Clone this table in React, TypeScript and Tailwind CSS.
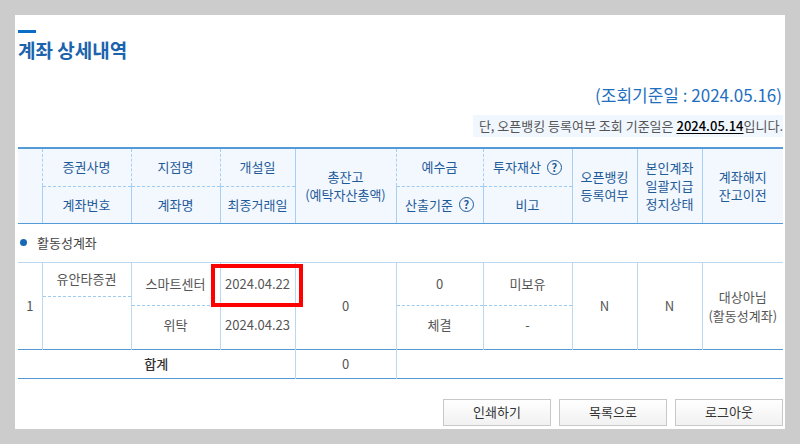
import React from 'react'

const th =
  'border-l border-[#a8d0f4] bg-[#f2f8fe] p-0 font-normal text-[#1f5a99] leading-[18px]'
const td = 'border-l border-[#bcd8f1] p-0 font-normal text-[#555] text-center'

const QIcon = () => (
  <span className="ml-[6px] inline-flex h-[15px] w-[15px] items-center justify-center rounded-full border-[1.5px] border-[#1f5a99] text-[11px] leading-none font-bold text-[#1f5a99]">
    ?
  </span>
)

const Split = ({
  top,
  bottom,
  topH,
  botH,
}: {
  top: React.ReactNode
  bottom?: React.ReactNode
  topH: string
  botH: string
}) => (
  <div className="flex flex-col">
    <div className={`${topH} flex items-center justify-center`}>{top}</div>
    <div
      className={`${botH} flex items-center justify-center border-t border-dashed border-[#9fcbf0] pb-1`}
    >
      {bottom}
    </div>
  </div>
)

const App = () => {
  return (
    <div className="min-h-[444px] bg-[#cccccc] p-[15px] font-['Noto_Sans_CJK_KR','Liberation_Sans',sans-serif]">
      <div className="h-[414px] w-[770px] bg-white pt-[15px] pr-[2px] pl-[3px]">
        <div className="h-[3px] w-[18px] bg-[#0a6ec8]" />
        <h1 className="mt-[4px] text-[19px] leading-[26px] font-bold text-[#1b64ad]">
          계좌 상세내역
        </h1>

        <div className="mt-[19px] flex flex-col items-end">
          <p className="pr-[1px] text-[17px] leading-[26px] text-[#1f6fbf]">
            (조회기준일 : 2024.05.16)
          </p>
          <p className="mt-[7px] h-[22px] bg-[#f1f7fe] pl-[6px] text-[13px] leading-[22px] text-[#555]">
            단, 오픈뱅킹 등록여부 조회 기준일은{' '}
            <span className="font-medium text-black underline underline-offset-2">
              2024.05.14
            </span>
            입니다.
          </p>
        </div>

        <table className="mt-[10px] w-full table-fixed border-collapse border-t-2 border-[#549ad6] text-[13px]">
          <colgroup>
            <col className="w-[24px]" />
            <col className="w-[89px]" />
            <col className="w-[89px]" />
            <col className="w-[75px]" />
            <col className="w-[101px]" />
            <col className="w-[87px]" />
            <col className="w-[89px]" />
            <col className="w-[65px]" />
            <col className="w-[65px]" />
            <col />
          </colgroup>
          <thead>
            <tr className="h-[38px]">
              <th rowSpan={2} className={`${th} border-l-0 border-b border-b-[#549ad6]`} />
              <th className={`${th} border-b border-dashed border-b-[#9fcbf0]`}>증권사명</th>
              <th className={`${th} border-b border-dashed border-b-[#9fcbf0]`}>지점명</th>
              <th className={`${th} border-b border-dashed border-b-[#9fcbf0]`}>개설일</th>
              <th rowSpan={2} className={`${th} border-b border-b-[#549ad6]`}>
                총잔고
                <br />
                (예탁자산총액)
              </th>
              <th className={`${th} border-b border-dashed border-b-[#9fcbf0]`}>예수금</th>
              <th className={`${th} border-b border-dashed border-b-[#9fcbf0]`}>
                <span className="inline-flex items-center">
                  투자재산
                  <QIcon />
                </span>
              </th>
              <th rowSpan={2} className={`${th} border-b border-b-[#549ad6]`}>
                오픈뱅킹
                <br />
                등록여부
              </th>
              <th rowSpan={2} className={`${th} border-b border-b-[#549ad6]`}>
                본인계좌
                <br />
                일괄지급
                <br />
                정지상태
              </th>
              <th rowSpan={2} className={`${th} border-b border-b-[#549ad6]`}>
                계좌해지
                <br />
                잔고이전
              </th>
            </tr>
            <tr className="h-[37px]">
              <th className={`${th} border-b border-b-[#549ad6]`}>계좌번호</th>
              <th className={`${th} border-b border-b-[#549ad6]`}>계좌명</th>
              <th className={`${th} border-b border-b-[#549ad6]`}>최종거래일</th>
              <th className={`${th} border-b border-b-[#549ad6]`}>
                <span className="inline-flex items-center">
                  산출기준
                  <QIcon />
                </span>
              </th>
              <th className={`${th} border-b border-b-[#549ad6]`}>비고</th>
            </tr>
          </thead>
          <tbody>
            <tr className="h-[39px] border-b border-[#bcd8f1]">
              <td colSpan={10} className="p-0">
                <div className="flex items-center gap-[10px] pl-[2px] text-[13px] text-[#444]">
                  <span className="h-[7px] w-[7px] rounded-full bg-[#1769b8]" />
                  활동성계좌
                </div>
              </td>
            </tr>
            <tr className="border-b border-[#549ad6]">
              <td className={`${td} border-l-0`}>1</td>
              <td className={td}>
                <Split top="유안타증권" topH="h-[33px]" botH="h-[53px]" />
              </td>
              <td className={td}>
                <Split top="스마트센터" bottom="위탁" topH="h-[42px]" botH="h-[44px]" />
              </td>
              <td className={td}>
                <div className="relative flex flex-col">
                  <div className="flex h-[42px] items-center justify-center">2024.04.22</div>
                  <div className="flex h-[44px] items-center justify-center pb-1">
                    2024.04.23
                  </div>
                  <div className="absolute top-[1px] left-[-10px] h-[43px] w-[92px] border-4 border-[#ff0000]" />
                </div>
              </td>
              <td className={td}>0</td>
              <td className={td}>
                <Split top="0" bottom="체결" topH="h-[42px]" botH="h-[44px]" />
              </td>
              <td className={td}>
                <Split top="미보유" bottom="-" topH="h-[42px]" botH="h-[44px]" />
              </td>
              <td className={td}>N</td>
              <td className={td}>N</td>
              <td className={`${td} leading-[19px]`}>
                대상아님
                <br />
                (활동성계좌)
              </td>
            </tr>
            <tr className="h-[29px] border-b border-[#549ad6]">
              <td colSpan={4} className="p-0 text-center font-medium text-[#333]">
                합계
              </td>
              <td className={td}>0</td>
              <td colSpan={5} className={td} />
            </tr>
          </tbody>
        </table>

        <div className="mt-[20px] flex justify-end gap-[8px]">
          {['인쇄하기', '목록으로', '로그아웃'].map((label) => (
            <button
              key={label}
              className="h-[27px] w-[108px] border border-[#c8c8c8] bg-gradient-to-b from-white to-[#f1f1f1] text-[13px] text-[#333]"
            >
              {label}
            </button>
          ))}
        </div>
      </div>
    </div>
  )
}

export default App
